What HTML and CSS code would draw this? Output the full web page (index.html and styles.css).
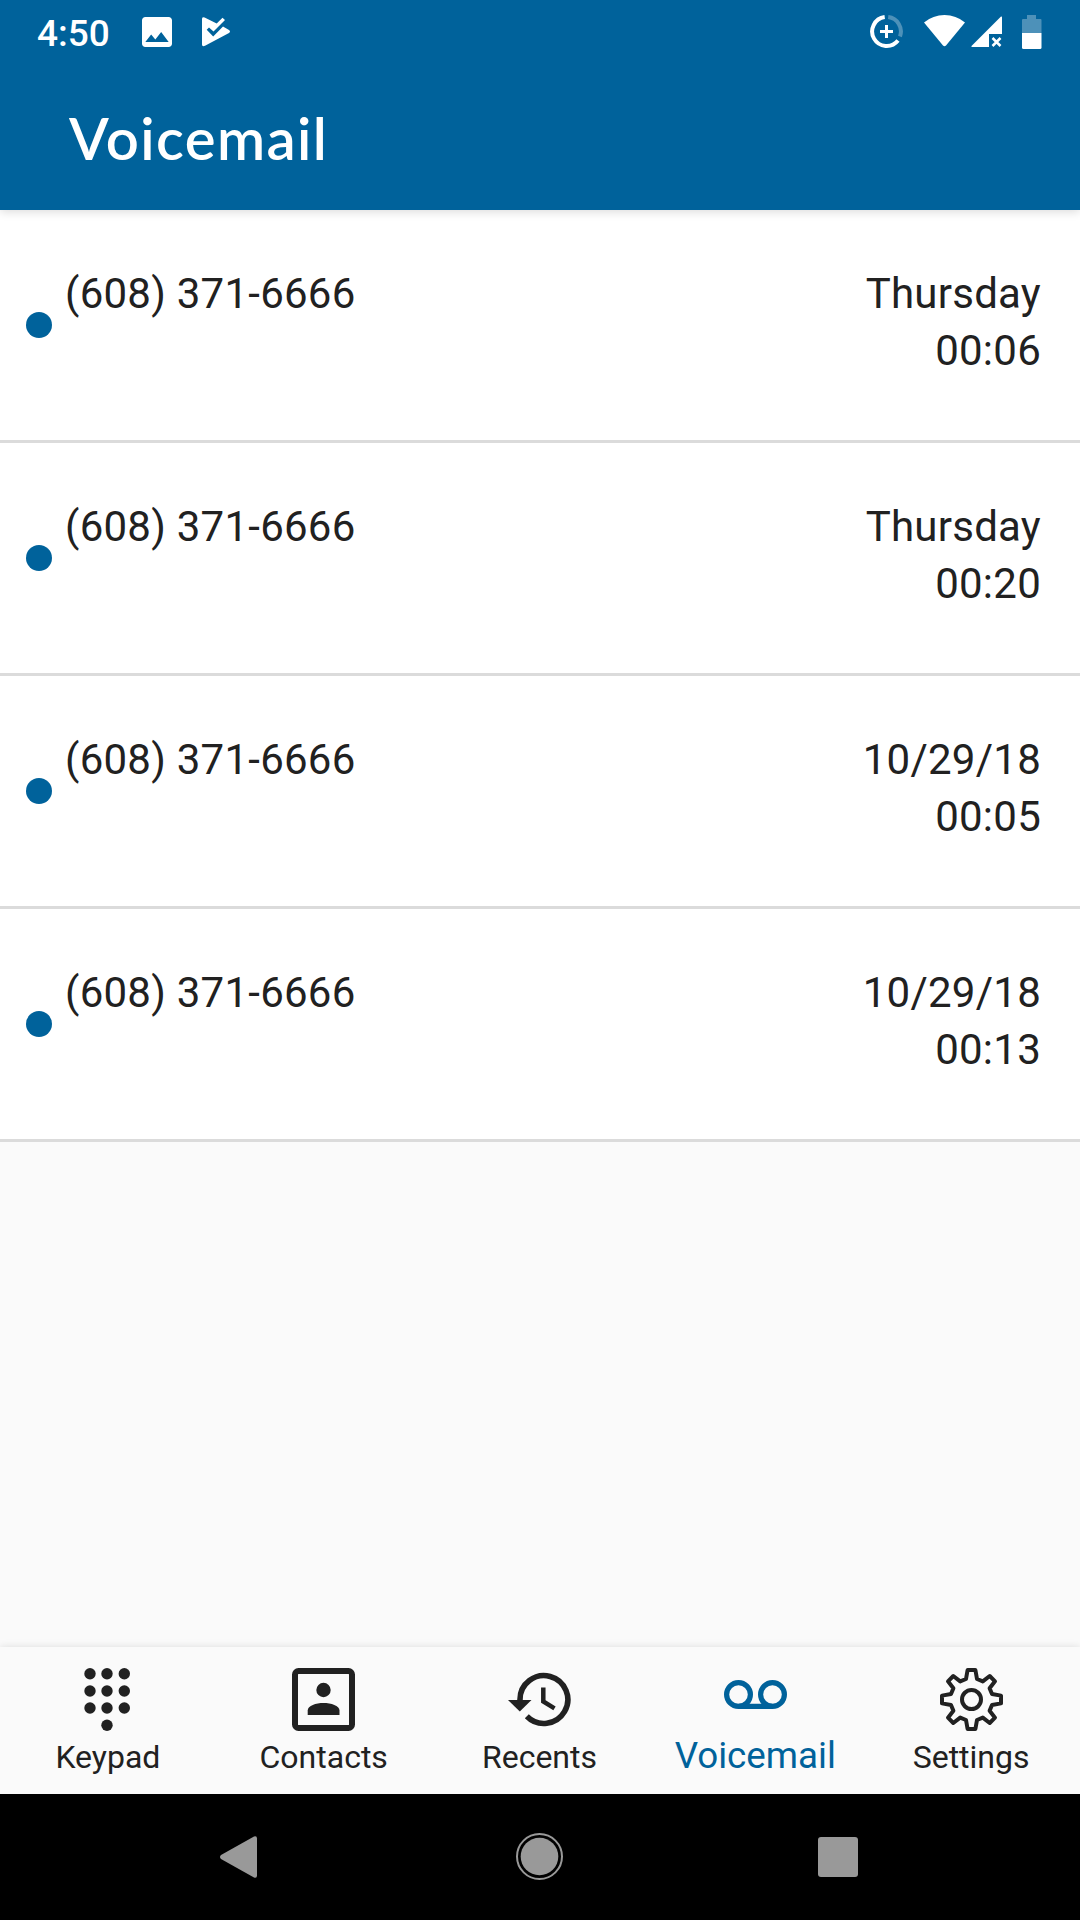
FILE: index.html
```html
<!DOCTYPE html>
<html lang="en">
  <head>
    <meta charset="UTF-8" />
    <meta name="viewport" content="width=device-width, initial-scale=1.0" />
    <title>Voicemail</title>
    <link rel="stylesheet" href="styles.css">
  </head>
  <body>
    <div class="wrapper">
      <header class="header">
        <div class="status">
          <span class="clock">4:50</span>
          <svg class="icon-image" width="40" height="40" viewBox="0 0 24 24"><path d="M21 19V5c0-1.1-.9-2-2-2H5c-1.1 0-2 .9-2 2v14c0 1.1.9 2 2 2h14c1.1 0 2-.9 2-2zM8.5 13.5l2.5 3.01L14.5 12l4.5 6H5l3.5-4.500z" /></svg>
          <svg class="icon-play" width="28" height="30" viewBox="0 0 28 30"><path d="M0 2Q0-.8 2.600.6L14.700 6.500 20.500.8 23 3 11.500 14.500 7 10.500 4.700 12.800 11.200 19.500 21 9.500 27 13Q29 14.500 27 16L3 28.800Q0 30 0 27.500z" /></svg>
          <div class="status-right">
            <svg width="34" height="34" viewBox="0.5 0.5 34 34" fill="none" stroke-width="4">
              <path d="M15.200 2.600A14.500 14.500 0 1 0 28.500 26" />
              <path d="M18.700 2.600A14.500 14.500 0 0 1 30.500 22" stroke-opacity=".3" />
              <path d="M17 10.500v13M10.500 17h13" stroke-width="3" />
            </svg>
            <svg class="icon-wifi" width="42" height="32" viewBox="0 0 42 32"><path d="M0 7.500Q9 0 20.500 0T41 7.500L22 30.500Q20.500 32 19 30.500z" /></svg>
            <svg class="icon-signal" width="32" height="32" viewBox="0 0 32 32"><path d="M30 0.500Q31 0 31 1.500V18H18V31H1Q0 31 .5 30z" /><path d="M21.500 22l8 8M29.500 22l-8 8" stroke-width="2.500" /></svg>
            <svg class="icon-battery" width="20" height="34" viewBox="0 0 20 34"><path d="M0 18V5Q0 4 1 4H5V0H14V4H18.500Q19.500 4 19.500 5V18z" opacity=".3" /><path d="M0 18H19.500V32.500Q19.500 34 18 34H1.500Q0 34 0 32.500z" /></svg>
          </div>
        </div>
        <h1 class="title">Voicemail</h1>
      </header>

      <main class="list">
        <div class="item">
          <span class="dot"></span>
          <p class="number">(608) 371-6666</p>
          <p class="info">Thursday<br />00:06</p>
        </div>
        <div class="item">
          <span class="dot"></span>
          <p class="number">(608) 371-6666</p>
          <p class="info">Thursday<br />00:20</p>
        </div>
        <div class="item">
          <span class="dot"></span>
          <p class="number">(608) 371-6666</p>
          <p class="info">10/29/18<br />00:05</p>
        </div>
        <div class="item">
          <span class="dot"></span>
          <p class="number">(608) 371-6666</p>
          <p class="info">10/29/18<br />00:13</p>
        </div>
      </main>

      <nav class="tabs">
        <a class="tab">
          <svg width="63" height="63" viewBox="0 0 63 63">
            <circle cx="14" cy="5.700" r="5.700" /><circle cx="31" cy="5.700" r="5.700" /><circle cx="48.300" cy="5.700" r="5.700" />
            <circle cx="14" cy="23" r="5.700" /><circle cx="31" cy="23" r="5.700" /><circle cx="48.300" cy="23" r="5.700" />
            <circle cx="14" cy="40" r="5.700" /><circle cx="31" cy="40" r="5.700" /><circle cx="48.300" cy="40" r="5.700" />
            <circle cx="31" cy="57.200" r="5.700" />
          </svg>
          <span>Keypad</span>
        </a>
        <a class="tab">
          <svg width="63" height="63" viewBox="0 0 63 63">
            <rect x="3" y="3" width="57" height="57" rx="3.500" fill="none" stroke="#212121" stroke-width="6" />
            <circle cx="31.500" cy="22" r="7.200" />
            <path d="M15.700 47V42.500C15.700 37.500 24 35 31.500 35S47.500 37.500 47.500 42.500V47z" />
          </svg>
          <span>Contacts</span>
        </a>
        <a class="tab">
          <svg width="63" height="63" viewBox="0 0 63 63" fill="none" stroke="#212121" stroke-width="5.600">
            <path d="M12 33V31.500A23.900 23.900 0 1 1 18.800 48.200" />
            <path d="M0 32H23.500L11.800 43.500z" fill="#212121" stroke="none" />
            <path d="M35.300 19.500V33.500L46.500 40.300" stroke-width="4.500" />
          </svg>
          <span>Recents</span>
        </a>
        <a class="tab active">
          <svg width="63" height="63" viewBox="0 0 63 63" fill="none" stroke="#00629b" stroke-width="5.200">
            <circle cx="14.500" cy="26.500" r="11.900" />
            <circle cx="48.500" cy="26.500" r="11.900" />
            <path d="M14.500 38.400H48.500" />
          </svg>
          <span>Voicemail</span>
        </a>
        <a class="tab">
          <svg width="63" height="63" viewBox="0 0 63 63" fill="none" stroke="#212121" stroke-width="4" stroke-linejoin="round">
            <path d="M27.600 2H35.400L37 11 42.800 13.400 49.700 8 55 13.300 49.600 20.200 52 26 61 27.600V35.400L52 37 49.600 42.800 55 49.700 49.700 55 42.800 49.600 37 52 35.400 61H27.600L26 52 20.200 49.600 13.300 55 8 49.700 13.400 42.800 11 37 2 35.400V27.600L11 26 13.400 20.200 8 13.300 13.300 8 20.200 13.400 26 11z" />
            <circle cx="31.500" cy="31.500" r="9.500" />
          </svg>
          <span>Settings</span>
        </a>
      </nav>

      <footer class="navbar">
        <svg class="back" width="38" height="42" viewBox="0 0 38 42"><path d="M1 19L34 .5Q37 -.5 37 2.500V39.500Q37 42.500 34 41.500L1 23Q-1 21 1 19z" /></svg>
        <svg class="home" width="48" height="48" viewBox="0 0 48 48"><circle cx="24.500" cy="23.500" r="22.500" fill="none" stroke="#999" stroke-width="2" /><circle cx="24.500" cy="23.500" r="18.800" /></svg>
        <span class="recent"></span>
      </footer>
    </div>
  </body>
</html>
```

FILE: styles.css
```css
* {
  padding: 0;
  margin: 0;
  box-sizing: border-box;
}

body {
  font-family: Roboto, sans-serif;
  color: #212121;
  background: #fafafa;
}

svg {
  display: block;
  flex-shrink: 0;
}

.wrapper {
  width: 1080px;
  height: 1920px;
  display: flex;
  flex-direction: column;
  overflow: hidden;
}

.header {
  height: 210px;
  flex-shrink: 0;
  background: #00629b;
  color: #fff;
  box-shadow: 0 2px 9px rgba(0, 0, 0, 0.14);
  z-index: 1;
}

.status {
  height: 63px;
  display: flex;
  align-items: center;
  padding-left: 37px;
  padding-right: 38px;
}

.status svg {
  fill: #fff;
  stroke: none;
}

.status-right svg:first-child {
  fill: none;
  stroke: #fff;
}

.clock {
  width: 100px;
  font-size: 37px;
  font-weight: 500;
  line-height: 63px;
  padding-top: 3px;
}

.icon-play {
  margin-left: 25px;
}

.status-right {
  display: flex;
  align-items: center;
  margin-left: auto;
}

.icon-wifi {
  margin-left: 20px;
  margin-top: -2px;
}

.icon-signal {
  margin-left: 5px;
}

.status .icon-signal path:last-child {
  stroke: #fff;
}

.icon-battery {
  margin-left: 19px;
}

.title {
  padding-left: 69px;
  padding-top: 37px;
  font-family: Lato, sans-serif;
  font-size: 58px;
  font-weight: 600;
  line-height: 76px;
  letter-spacing: 1.4px;
}

.list {
  flex: 1;
}

.item {
  height: 233px;
  display: flex;
  align-items: flex-start;
  padding: 55px 39px 0 26px;
  background: #fff;
  border-bottom: 3px solid #dbdbdb;
  font-size: 42px;
  line-height: 57px;
  letter-spacing: 0.25px;
}

.dot {
  width: 26px;
  height: 26px;
  margin-top: 47px;
  margin-right: 13px;
  border-radius: 50%;
  background: #00629b;
}

.info {
  margin-left: auto;
  text-align: right;
}

.tabs {
  height: 147px;
  flex-shrink: 0;
  display: flex;
  padding-right: 1px;
  background: #fafafa;
  box-shadow: 0 0 8px rgba(0, 0, 0, 0.12);
}

.tab {
  flex: 1;
  display: flex;
  flex-direction: column;
  align-items: center;
  padding-top: 21px;
  fill: #212121;
  font-size: 32px;
  line-height: 40px;
}

.tab span {
  margin-top: 6px;
}

.active {
  color: #00629b;
  font-size: 36.75px;
}

.active span {
  margin-top: 5px;
}

.navbar {
  height: 126px;
  flex-shrink: 0;
  display: flex;
  align-items: center;
  padding-left: 220px;
  background: #000;
  fill: #999;
  z-index: 1;
}

.home {
  margin-left: 257px;
}

.recent {
  width: 40px;
  height: 40px;
  margin-left: 255px;
  border-radius: 3px;
  background: #999;
}
```
